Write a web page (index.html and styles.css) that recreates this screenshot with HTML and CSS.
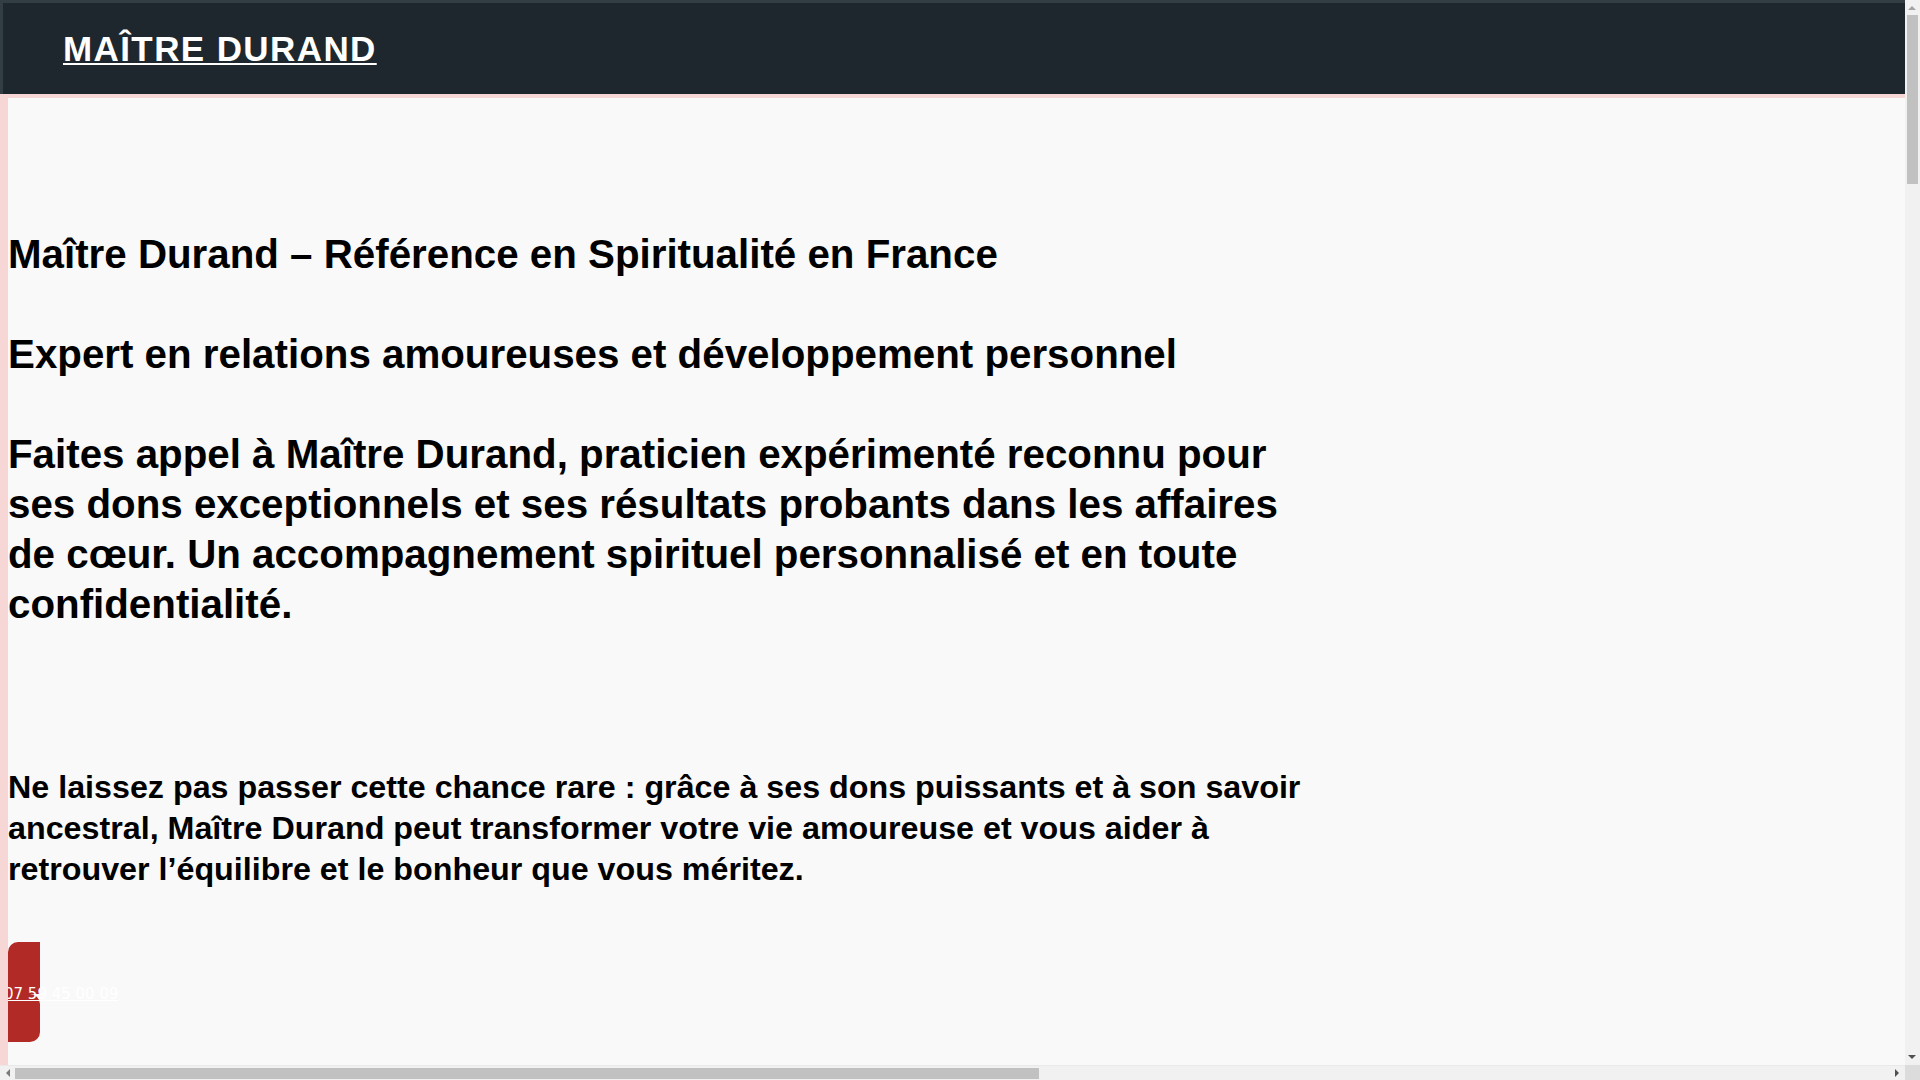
FILE: index.html
```html
<!DOCTYPE html>
<html lang="fr">
<head>
<meta charset="utf-8">
<title>Maître Durand</title>
<link rel="stylesheet" href="styles.css">
</head>
<body>
<header class="site-header">
  <a class="brand" href="#">Maître Durand</a>
</header>
<main class="content">
  <div class="inner">
    <h1 class="big">Maître Durand – Référence en Spiritualité en France</h1>
    <h2 class="big">Expert en relations amoureuses et développement personnel</h2>
    <p class="big lead">Faites appel à Maître Durand, praticien expérimenté reconnu pour ses dons exceptionnels et ses résultats probants dans les affaires de cœur. Un accompagnement spirituel personnalisé et en toute confidentialité.</p>
    <p class="medium">Ne laissez pas passer cette chance rare : grâce à ses dons puissants et à son savoir ancestral, Maître Durand peut transformer votre vie amoureuse et vous aider à retrouver l’équilibre et le bonheur que vous méritez.</p>
    <div class="call">
      <span class="call-top"></span>
      <span class="call-bottom"></span>
      <a class="call-text" href="#">07 59 45 00 09</a>
    </div>
  </div>
</main>
<div class="edge-strip"></div>
<div class="vscroll">
  <span class="arrow arrow-up"></span>
  <span class="vthumb"></span>
  <span class="arrow arrow-down"></span>
</div>
<div class="hscroll">
  <span class="arrow arrow-left"></span>
  <span class="hthumb"></span>
  <span class="arrow arrow-right"></span>
</div>
<div class="scroll-corner"></div>
</body>
</html>
```

FILE: styles.css
```css
html {
  background: #f7d6d6;
  overflow: hidden;
  height: 100%;
}
body {
  margin: 0;
  height: 100%;
  font-family: "Liberation Sans", Arial, sans-serif;
  color: #000;
  display: flex;
  flex-direction: column;
}
.site-header {
  flex: 0 0 auto;
  height: 91px;
  background: #1d272d;
  border-top: 3px solid #333e44;
  border-left: 3px solid #333e44;
  padding-left: 60px;
  display: flex;
  align-items: center;
}
.brand {
  color: #fff;
  font-size: 35px;
  font-weight: bold;
  letter-spacing: 1.4px;
  text-transform: uppercase;
  text-decoration: underline;
  text-decoration-thickness: 2px;
  text-underline-offset: 2px;
}
.content {
  flex: 1;
  margin: 4px 0 0 8px;
  background: #f9f9f9;
  padding-top: 132px;
}
.inner {
  width: 1310px;
}
.big {
  font-size: 40.3px;
  line-height: 50px;
  font-weight: bold;
  margin: 0 0 50px;
}
.lead {
  margin-bottom: 137px;
}
.medium {
  font-size: 32.25px;
  line-height: 41px;
  font-weight: bold;
  margin: 0 0 52px;
}
.call {
  position: relative;
  width: 32px;
  height: 100px;
  display: flex;
  flex-direction: column;
}
.call-top {
  flex: 0 0 52px;
  background: #b22a25;
  border-top-left-radius: 10px;
}
.call-bottom {
  flex: 1;
  background: #b22a25;
  border-radius: 0 10px 10px 0;
}
.call-text {
  position: absolute;
  left: -4px;
  top: calc(50% + 2px);
  transform: translateY(-50%);
  white-space: nowrap;
  color: #fff;
  font-family: "DejaVu Sans", sans-serif;
  font-size: 15px;
  font-weight: normal;
  text-decoration: underline;
  text-decoration-thickness: 1px;
}
.edge-strip {
  position: fixed;
  left: 0;
  top: 98px;
  bottom: 15px;
  width: 8px;
  background: #f7d6d6;
  z-index: 5;
}
.vscroll {
  position: fixed;
  top: 0;
  right: 0;
  width: 15px;
  height: 1065px;
  background: #f1f1f1;
  z-index: 10;
  display: flex;
  flex-direction: column;
  align-items: center;
}
.vthumb {
  width: 11px;
  height: 169px;
  background: #c1c1c1;
}
.hscroll {
  position: fixed;
  left: 0;
  bottom: 0;
  width: 1905px;
  height: 15px;
  background: #f1f1f1;
  border-top: 1px solid #e9e9e9;
  box-sizing: border-box;
  z-index: 10;
  display: flex;
  align-items: center;
}
.hthumb {
  width: 1024px;
  height: 11px;
  background: #c1c1c1;
}
.arrow {
  flex: 0 0 15px;
  width: 15px;
  height: 15px;
  position: relative;
}
.arrow::after {
  content: "";
  position: absolute;
  width: 0;
  height: 0;
  border: 4px solid transparent;
}
.arrow-up::after {
  left: 3px;
  top: 2px;
  border-bottom: 4px solid #a3a3a3;
  border-left-width: 4.5px;
  border-right-width: 4.5px;
}
.arrow-down {
  margin-top: auto;
}
.arrow-down::after {
  left: 3px;
  top: 5px;
  border-top: 4px solid #505050;
  border-left-width: 4.5px;
  border-right-width: 4.5px;
}
.arrow-left::after {
  left: 2px;
  top: 3px;
  border-right: 4px solid #7a7a7a;
  border-top-width: 4.5px;
  border-bottom-width: 4.5px;
}
.arrow-right {
  margin-left: auto;
}
.arrow-right::after {
  left: 5px;
  top: 3px;
  border-left: 4px solid #505050;
  border-top-width: 4.5px;
  border-bottom-width: 4.5px;
}
.scroll-corner {
  position: fixed;
  right: 0;
  bottom: 0;
  width: 15px;
  height: 15px;
  background: #dcdcdc;
  z-index: 10;
}
```
